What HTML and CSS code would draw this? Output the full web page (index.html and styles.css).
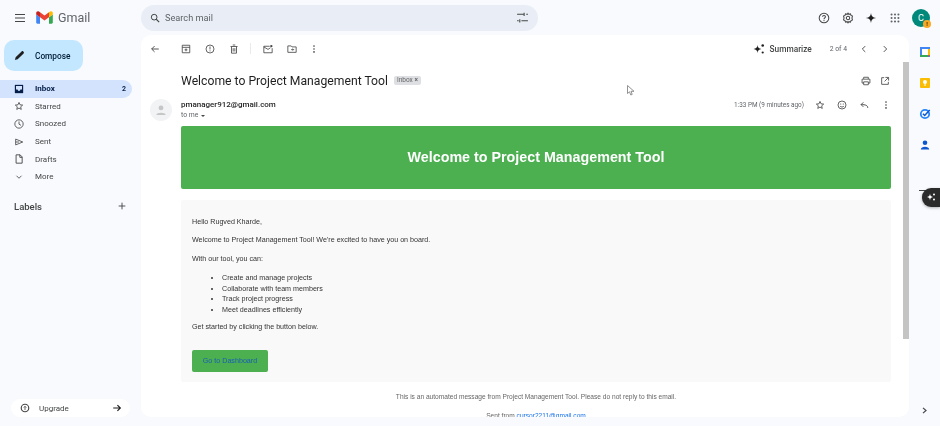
FILE: index.html
```html
<!DOCTYPE html>
<html lang="en">
<head>
  <meta charset="UTF-8">
  <title>Gmail</title>
  <meta name="viewport" content="width=device-width, initial-scale=1.0">
  <link rel="stylesheet" href="styles.css">
</head>
<body>

  <header class="topbar">
    <div class="brand">
      <svg class="menu-icon" viewBox="0 0 12 10"><path d="M1 1.5h10M1 5h10M1 8.5h10" stroke="#444746" stroke-width="1.1" fill="none"/></svg>
      <svg class="logo" viewBox="0 0 17 13">
        <path d="M0.2 3.5V11.5C0.2 12.2 0.7 12.7 1.4 12.7H4V6.2Z" fill="#4285f4"/>
        <path d="M13 6.2V12.7H15.6C16.3 12.7 16.8 12.2 16.8 11.5V3.5Z" fill="#34a853"/>
        <path d="M13 1.2V6.2L16.8 3.5V2C16.8 0.6 15.2 -0.2 14.1 0.6Z" fill="#fbbc04"/>
        <path d="M4 6.2V1.2L8.5 4.6L13 1.2V6.2L8.5 9.6Z" fill="#ea4335"/>
        <path d="M0.2 2V3.5L4 6.2V1.2L2.9 0.6C1.8 -0.2 0.2 0.6 0.2 2Z" fill="#c5221f"/>
      </svg>
      <span class="logo-text">Gmail</span>
    </div>
    <div class="search">
      <svg class="icon-md" viewBox="0 0 12 12"><circle cx="5" cy="5" r="3.4" stroke="#444746" stroke-width="1.2" fill="none"/><path d="M7.5 7.5L11 11" stroke="#444746" stroke-width="1.4"/></svg>
      <span class="search-text">Search mail</span>
      <svg class="search-tune" viewBox="0 0 12 12"><path d="M1 3h6M9.500 3H11M1 9h1.500M5 9h6M7.500 1.500v3M3.500 7.500v3" stroke="#444746" fill="none"/></svg>
    </div>
    <div class="top-actions">
      <svg class="icon-lg" viewBox="0 0 14 14"><circle cx="7" cy="7" r="5.6" stroke="#444746" stroke-width="1.2" fill="none"/><path d="M5.3 5.6C5.3 3.500 8.700 3.500 8.700 5.600C8.700 6.900 7 6.900 7 8.400" stroke="#444746" stroke-width="1.2" fill="none"/><circle cx="7" cy="10" r=".7" fill="#444746"/></svg>
      <svg class="icon-lg" viewBox="0 0 14 14"><path d="M7 1.300L8 2.700L9.900 2.200L10.500 3.900L12.200 4.700L11.600 7L12.200 9.300L10.500 10.100L9.900 11.800L8 11.300L7 12.700L6 11.300L4.100 11.800L3.500 10.100L1.800 9.300L2.400 7L1.800 4.700L3.500 3.900L4.100 2.200L6 2.700Z" stroke="#444746" stroke-width="1.2" fill="none"/><circle cx="7" cy="7" r="2" stroke="#444746" stroke-width="1.2" fill="none"/></svg>
      <svg class="icon-lg" viewBox="0 0 14 14"><path d="M7 1C7.400 5 9 6.600 13 7C9 7.400 7.400 9 7 13C6.600 9 5 7.400 1 7C5 6.600 6.600 5 7 1Z" fill="#1f1f1f"/></svg>
      <svg class="icon-lg" viewBox="0 0 14 14" fill="#5f6368"><circle cx="3" cy="3" r="1.2"/><circle cx="7" cy="3" r="1.2"/><circle cx="11" cy="3" r="1.2"/><circle cx="3" cy="7" r="1.2"/><circle cx="7" cy="7" r="1.2"/><circle cx="11" cy="7" r="1.2"/><circle cx="3" cy="11" r="1.2"/><circle cx="7" cy="11" r="1.2"/><circle cx="11" cy="11" r="1.2"/></svg>
      <div class="account">C<span class="account-badge">!</span></div>
    </div>
  </header>

  <div class="workspace">
    <nav class="sidebar">
      <button class="compose">
        <svg class="compose-icon" viewBox="0 0 12 12"><path d="M1 11L1.800 8L8.300 1.500C8.800 1 9.500 1 10 1.500L10.500 2C11 2.500 11 3.200 10.500 3.700L4 10.200Z" fill="#1f1f1f"/></svg>
        Compose
      </button>
      <ul class="nav-list">
        <li class="nav-item active">
          <svg class="icon-md" viewBox="0 0 12 12"><path d="M1 1h10v10H1z" fill="#041e49"/><path d="M2.400 2.400h7.200v4.200H7.700a1.700 1.700 0 0 1-3.400 0H2.400z" fill="#d3e3fd"/></svg>
          <span>Inbox</span><span class="count">2</span>
        </li>
        <li class="nav-item">
          <svg class="icon-md" viewBox="0 0 12 12"><path d="M6 1.700L7.300 4.600L10.400 4.900L8 7L8.700 10.100L6 8.500L3.300 10.100L4 7L1.600 4.900L4.700 4.600Z" stroke="#444746" fill="none"/></svg>
          <span>Starred</span>
        </li>
        <li class="nav-item">
          <svg class="icon-md" viewBox="0 0 12 12"><circle cx="6" cy="6" r="5" stroke="#444746" fill="none"/><path d="M6 3V6.200L8.400 7.600" stroke="#444746" fill="none"/></svg>
          <span>Snoozed</span>
        </li>
        <li class="nav-item">
          <svg class="icon-md" viewBox="0 0 12 12"><path d="M2 2.500L10.500 6L2 9.500ZM2 6H6" stroke="#444746" fill="none"/></svg>
          <span>Sent</span>
        </li>
        <li class="nav-item">
          <svg class="icon-md" viewBox="0 0 12 12"><path d="M2.500 1H7.300L9.800 3.500V11H2.500ZM7 1V4H9.800" stroke="#444746" stroke-width="1.100" fill="none"/></svg>
          <span>Drafts</span>
        </li>
        <li class="nav-item">
          <svg class="icon-md" viewBox="0 0 12 12"><path d="M3 4.500L6 7.500L9 4.500" stroke="#444746" fill="none"/></svg>
          <span>More</span>
        </li>
      </ul>
      <div class="labels">
        <span>Labels</span>
        <svg class="icon-md" viewBox="0 0 12 12"><path d="M6 2V10M2 6H10" stroke="#444746" stroke-width="1.100"/></svg>
      </div>
      <div class="upgrade">
        <svg class="icon-md" viewBox="0 0 12 12"><circle cx="6" cy="6" r="4.500" stroke="#444746" stroke-width="1.400" fill="none"/><path d="M6 8.500V4M4.500 5.500L6 4L7.500 5.500" stroke="#444746" fill="none"/></svg>
        <span>Upgrade</span>
        <svg class="icon-md upgrade-arrow" viewBox="0 0 12 12"><path d="M1.500 6H10M6.500 2.500L10 6L6.500 9.500" stroke="#1f1f1f" stroke-width="1.400" fill="none"/></svg>
      </div>
    </nav>

    <main class="mail-card">
      <div class="toolbar">
        <svg class="icon-md back" viewBox="0 0 12 12"><path d="M10.500 6H2M5.500 2.500L2 6L5.500 9.500" stroke="#444746" stroke-width="1.100" fill="none"/></svg>
        <div class="tool-group">
          <svg class="icon-md" viewBox="0 0 12 12"><path d="M1.500 1.500H10.500V10.500H1.500ZM1.500 4H10.500M4.300 7H7.700M6 5.300V8.700" stroke="#444746" fill="none"/></svg>
          <svg class="icon-md" viewBox="0 0 12 12"><circle cx="6" cy="6" r="4.800" stroke="#444746" fill="none"/><path d="M6 3V6.500M6 7.700V8.900" stroke="#444746" fill="none"/></svg>
          <svg class="icon-md" viewBox="0 0 12 12"><path d="M3 3.300V11H9V3.300M1.800 3H10.200M4.500 1.200H7.500M5 5V9M7 5V9" stroke="#444746" fill="none"/></svg>
          <span class="tool-sep"></span>
          <svg class="icon-md" viewBox="0 0 12 12"><path d="M8 2.700H1V10.500H11V5M1 3.500L6 6.500L9 4.500" stroke="#444746" fill="none"/><circle cx="10" cy="2.500" r="1.400" fill="#444746"/></svg>
          <svg class="icon-md" viewBox="0 0 12 12"><path d="M1 2.300H5L6 3.500H11V10H1ZM5 6.700H7.800M6.800 5.500L8 6.700L6.800 7.900" stroke="#444746" fill="none"/></svg>
          <svg class="icon-md tool-more" viewBox="0 0 12 12" fill="#444746"><circle cx="6" cy="2.500" r="1"/><circle cx="6" cy="6" r="1"/><circle cx="6" cy="9.500" r="1"/></svg>
        </div>
        <div class="summarize">
          <svg class="summarize-icon" viewBox="0 0 12 12" fill="#1f1f1f"><path d="M4.500 2C4.800 4.500 5.800 5.700 8.500 6C5.800 6.300 4.800 7.500 4.500 10C4.200 7.500 3.200 6.300 .5 6C3.200 5.700 4.200 4.500 4.500 2Z"/><circle cx="9.700" cy="2.500" r="1.300"/><circle cx="9.700" cy="9.500" r="1.100"/></svg>
          <span>Summarize</span>
        </div>
        <span class="pager">2 of 4</span>
        <svg class="icon-md" viewBox="0 0 12 12"><path d="M7.500 2.500L4 6L7.500 9.500" stroke="#444746" stroke-width="1.100" fill="none"/></svg>
        <svg class="icon-md pager-next" viewBox="0 0 12 12"><path d="M4.500 2.500L8 6L4.500 9.500" stroke="#444746" stroke-width="1.100" fill="none"/></svg>
      </div>

      <div class="mail-scroll">
        <div class="thread">
          <div class="subject-row">
            <h1>Welcome to Project Management Tool</h1>
            <span class="tag">Inbox <span class="tag-x">×</span></span>
            <div class="subject-actions">
              <svg class="icon-md" viewBox="0 0 12 12"><path d="M3.200 3.500V1.500H8.800V3.500M3.200 8.500H1.300V3.800H10.700V8.500H8.800M3.200 7H8.800V10.500H3.200Z" stroke="#444746" fill="none"/></svg>
              <svg class="icon-md" viewBox="0 0 12 12"><path d="M5 2H2V10H10V7M6.500 1.700H10.300V5.500M10 2L5.500 6.500" stroke="#444746" fill="none"/></svg>
            </div>
          </div>

          <div class="sender-row">
            <div class="avatar">
              <svg viewBox="0 0 12 12" fill="#c4c7c5"><circle cx="6" cy="4.200" r="2.100"/><path d="M2 10.300C2 7.800 10 7.800 10 10.300Z"/></svg>
            </div>
            <div class="sender-info">
              <div class="sender-name">pmanager912@gmail.com</div>
              <div class="to-me">to me <span class="caret"></span></div>
            </div>
            <div class="sender-meta">
              <span class="sent-time">1:33 PM (9 minutes ago)</span>
              <svg class="icon-md" viewBox="0 0 12 12"><path d="M6 1.700L7.300 4.600L10.400 4.900L8 7L8.700 10.100L6 8.500L3.300 10.100L4 7L1.600 4.900L4.700 4.600Z" stroke="#444746" fill="none"/></svg>
              <svg class="icon-md" viewBox="0 0 12 12"><circle cx="6" cy="6" r="4.800" stroke="#444746" fill="none"/><path d="M3.800 7.500C4.800 8.700 7.200 8.700 8.200 7.500" stroke="#444746" fill="none"/><circle cx="4.500" cy="4.800" r=".7" fill="#444746"/><circle cx="7.500" cy="4.800" r=".7" fill="#444746"/></svg>
              <svg class="icon-md" viewBox="0 0 12 12"><path d="M10.500 9.500C10.500 6.500 8 5.500 2.500 5.500M5.200 2.800L2.500 5.500L5.200 8.200" stroke="#444746" stroke-width="1.100" fill="none"/></svg>
              <svg class="icon-md" viewBox="0 0 12 12" fill="#444746"><circle cx="6" cy="2.500" r="1"/><circle cx="6" cy="6" r="1"/><circle cx="6" cy="9.500" r="1"/></svg>
            </div>
          </div>

          <div class="email-banner">Welcome to Project Management Tool</div>

          <div class="email-body">
            <p>Hello Rugved Kharde,</p>
            <p>Welcome to Project Management Tool! We're excited to have you on board.</p>
            <p>With our tool, you can:</p>
            <ul>
              <li>Create and manage projects</li>
              <li>Collaborate with team members</li>
              <li>Track project progress</li>
              <li>Meet deadlines efficiently</li>
            </ul>
            <p>Get started by clicking the button below.</p>
            <a class="email-btn" href="#">Go to Dashboard</a>
          </div>

          <div class="email-footer">
            <p>This is an automated message from Project Management Tool. Please do not reply to this email.</p>
            <p>Sent from <a href="#">cursor2211@gmail.com</a></p>
          </div>
        </div>
        <div class="scrollbar"><div class="scroll-thumb"></div></div>
      </div>

      <!-- mouse pointer caught in the screenshot -->
      <svg class="pointer" viewBox="0 0 8 11"><path d="M.5 .5V8.500L2.500 6.800L3.800 10L5.200 9.400L4 6.300H7Z" fill="#fff" stroke="#777" stroke-width=".8"/></svg>
    </main>

    <aside class="addons">
      <div class="addon-list">
        <svg class="addon" viewBox="0 0 12 12"><path d="M1 1H11V11H1Z" fill="#4285f4"/><path d="M1 9H9V11H2C1.400 11 1 10.600 1 10Z" fill="#34a853"/><path d="M9 3H11V9H9Z" fill="#fbbc04"/><path d="M9 9H11L9 11Z" fill="#ea4335"/><path d="M3 3H9V9H3Z" fill="#fff"/></svg>
        <svg class="addon" viewBox="0 0 12 12"><rect x="1" y="1" width="10" height="10" rx="1" fill="#fbbc04"/><circle cx="6" cy="5" r="2" fill="#fff"/><path d="M5 7.500H7V8.500H5Z" fill="#fff"/></svg>
        <svg class="addon" viewBox="0 0 12 12"><circle cx="6" cy="6" r="4.200" stroke="#2684fc" stroke-width="1.800" fill="none"/><path d="M4 5.800L5.700 7.500L10.700 2" stroke="#0b57d0" stroke-width="1.500" fill="none"/></svg>
        <svg class="addon" viewBox="0 0 12 12" fill="#0b57d0"><circle cx="6" cy="3.700" r="2.300"/><path d="M1.800 10.500C1.800 6.700 10.200 6.700 10.200 10.500Z"/></svg>
      </div>
      <div class="addon-divider"></div>
      <div class="gemini-pill">
        <svg viewBox="0 0 12 12" fill="#fff"><path d="M5 2.500C5.200 4.700 6 5.500 8 6C6 6.500 5.200 7.300 5 9.500C4.800 7.300 4 6.500 2 6C4 5.500 4.800 4.700 5 2.500Z"/><circle cx="9" cy="3.500" r="1"/><circle cx="9" cy="8.500" r="1"/></svg>
      </div>
      <svg class="addon-expand" viewBox="0 0 12 12"><path d="M4 2.500L8 6L4 9.500" stroke="#444746" stroke-width="1.600" fill="none"/></svg>
    </aside>
  </div>

</body>
</html>
```

FILE: styles.css
```css
* {
  box-sizing: border-box;
}

html, body {
  height: 100%;
}

body {
  margin: 0;
  background: #f8fafd;
  color: #1f1f1f;
  font-family: Roboto, 'Noto Sans', sans-serif;
  overflow: hidden;
  /* the reference is a rescaled, soft screenshot */
  filter: blur(0.4px);
}

svg {
  display: block;
  flex-shrink: 0;
}

.icon-md {
  width: 10px;
  height: 10px;
}

.icon-lg {
  width: 12px;
  height: 12px;
}

/* top bar */
.topbar {
  display: flex;
  align-items: center;
  height: 35px;
}

.brand {
  display: flex;
  align-items: center;
  width: 141px;
  padding-left: 14px;
}

.menu-icon {
  width: 12px;
  height: 10px;
  margin-right: 10px;
}

.logo {
  width: 17px;
  height: 13px;
  margin-right: 5px;
}

.logo-text {
  font-size: 12.5px;
  color: #5f6368;
}

.search {
  display: flex;
  align-items: center;
  width: 397px;
  height: 26px;
  padding: 0 9px 0 9px;
  background: #e9eef6;
  border-radius: 13px;
}

.search-text {
  margin-left: 5px;
  font-size: 9.2px;
  color: #5f6368;
}

.search-tune {
  width: 13px;
  height: 13px;
  margin-left: auto;
}

.top-actions {
  display: flex;
  align-items: center;
  gap: 11.5px;
  margin-left: auto;
  padding-right: 10px;
}

.account {
  position: relative;
  width: 18px;
  height: 18px;
  border-radius: 50%;
  background: #00897b;
  color: #fff;
  font-size: 9px;
  line-height: 18px;
  text-align: center;
}

.account-badge {
  position: absolute;
  right: -1px;
  bottom: -1px;
  width: 8px;
  height: 8px;
  border-radius: 50%;
  background: #f9a825;
  color: #3c2a00;
  font-size: 6px;
  font-weight: 700;
  line-height: 8px;
}

/* layout */
.workspace {
  display: flex;
  height: 382px;
}

.sidebar {
  display: flex;
  flex-direction: column;
  width: 141px;
}

.compose {
  display: flex;
  align-items: center;
  gap: 10px;
  width: 79px;
  height: 31px;
  margin: 5px 0 9px 4px;
  padding: 0 0 0 10px;
  border: none;
  border-radius: 10px;
  background: #c2e7ff;
  color: #001d35;
  font-family: inherit;
  font-size: 8.3px;
  font-weight: 500;
}

.compose-icon {
  width: 11px;
  height: 11px;
}

.nav-list {
  margin: 0;
  padding: 0;
  list-style: none;
}

.nav-item {
  display: flex;
  align-items: center;
  gap: 11px;
  width: 132px;
  height: 17.6px;
  padding: 0 6px 0 14px;
  border-radius: 0 9px 9px 0;
  font-size: 8px;
  color: #444746;
}

.nav-item.active {
  background: #d3e3fd;
  color: #041e49;
  font-weight: 700;
}

.count {
  margin-left: auto;
  font-size: 7px;
}

.labels {
  display: flex;
  align-items: center;
  justify-content: space-between;
  width: 132px;
  margin-top: 15px;
  padding: 0 5px 0 14px;
  font-size: 9.5px;
  font-weight: 500;
  color: #444746;
}

.upgrade {
  display: flex;
  align-items: center;
  gap: 9px;
  width: 119px;
  height: 18px;
  margin: auto 0 0 11px;
  padding: 0 8px 0 9px;
  border-radius: 9px;
  background: #fff;
  font-size: 8px;
  color: #444746;
}

.upgrade-arrow {
  margin-left: auto;
}

/* mail card */
.mail-card {
  position: relative;
  display: flex;
  flex-direction: column;
  width: 768px;
  border-radius: 10px;
  background: #fff;
  overflow: hidden;
}

.pointer {
  position: absolute;
  top: 50px;
  left: 486px;
  width: 8px;
  height: 11px;
}

.toolbar {
  display: flex;
  align-items: center;
  height: 27px;
  padding: 0 19px 0 9px;
  flex-shrink: 0;
}

.back {
  margin-right: 21px;
}

.tool-group {
  display: flex;
  align-items: center;
  gap: 14px;
}

.tool-sep {
  width: 1px;
  height: 11px;
  margin: 0 -2px 0 -3px;
  background: #e8eaed;
}

.tool-more {
  margin-left: -2px;
}

.summarize {
  display: flex;
  align-items: center;
  gap: 5px;
  margin-left: auto;
  font-size: 8.3px;
  font-weight: 500;
  color: #444746;
}

.summarize-icon {
  width: 12px;
  height: 12px;
}

.pager {
  margin: 0 12px 0 18px;
  font-size: 6.8px;
  color: #5f6368;
}

.pager-next {
  margin-left: 11px;
}

.mail-scroll {
  display: flex;
  flex: 1;
  min-height: 0;
}

.thread {
  flex: 1;
  min-width: 0;
  padding: 0 12px 0 9px;
  overflow: hidden;
}

.subject-row {
  display: flex;
  align-items: center;
  height: 37px;
  padding: 0 1px 0 31px;
}

.subject-row h1 {
  margin: 0;
  font-size: 12.2px;
  font-weight: 400;
  color: #1f1f1f;
}

.tag {
  margin-left: 6px;
  padding: 0 3px;
  border-radius: 2px;
  background: #dddfe2;
  font-size: 6.5px;
  line-height: 9px;
  color: #666;
}

.tag-x {
  font-weight: 700;
}

.subject-actions {
  display: flex;
  gap: 9px;
  margin-left: auto;
}

.sender-row {
  display: flex;
  height: 27px;
}

.avatar {
  width: 22px;
  height: 22px;
  margin-right: 9px;
  border-radius: 50%;
  background: #f1f3f4;
  padding: 4px;
}

.sender-info {
  padding-top: 1px;
}

.sender-name {
  font-size: 8px;
  font-weight: 500;
  line-height: 10px;
  color: #1f1f1f;
}

.to-me {
  display: flex;
  align-items: center;
  gap: 3px;
  font-size: 6.8px;
  line-height: 11px;
  color: #5f6368;
}

.caret {
  width: 0;
  height: 0;
  border: 2.3px solid transparent;
  border-top: 2.5px solid #444746;
  border-bottom: 0;
}

.sender-meta {
  display: flex;
  align-items: center;
  align-self: flex-start;
  gap: 12px;
  height: 12px;
  margin-left: auto;
}

.sent-time {
  margin-right: -1px;
  font-size: 6.4px;
  color: #5f6368;
}

.email-banner {
  height: 63px;
  margin-left: 31px;
  border-radius: 2px;
  background: #4caf50;
  color: #fff;
  font-family: 'Liberation Sans', Arial, sans-serif;
  font-size: 14.3px;
  font-weight: 700;
  line-height: 62px;
  text-align: center;
}

.email-body {
  height: 182px;
  margin: 11px 0 0 31px;
  padding: 18px 11px;
  background: #f9f9f9;
  border-radius: 2px;
  font-family: 'Liberation Sans', Arial, sans-serif;
  font-size: 7.15px;
  color: #333;
}

.email-body p {
  margin: 0 0 10px;
  line-height: 8.3px;
}

.email-body ul {
  margin: 0 0 7px;
  padding-left: 30px;
}

.email-body li {
  line-height: 10.8px;
}

.email-btn {
  display: block;
  width: 76px;
  height: 22px;
  margin-top: 19px;
  border-radius: 2px;
  background: #4caf50;
  color: #1a5fb4;
  line-height: 22px;
  text-align: center;
  text-decoration: none;
}

.email-footer {
  margin: 11px 0 0 31px;
  font-family: 'Liberation Sans', Arial, sans-serif;
  font-size: 6.6px;
  color: #666;
  text-align: center;
}

.email-footer p {
  margin: 0 0 11px;
  line-height: 8px;
}

.email-footer a {
  color: #1a73e8;
}

.scrollbar {
  width: 6px;
  flex-shrink: 0;
}

.scroll-thumb {
  height: 277px;
  background: #c4c4c4;
}

/* right add-ons */
.addons {
  position: relative;
  flex: 1;
  padding-top: 11px;
}

.addon-list {
  display: flex;
  flex-direction: column;
  align-items: center;
  gap: 19px;
}

.addon {
  width: 12px;
  height: 12px;
}

.addon-divider {
  width: 11px;
  height: 1px;
  margin: 39px auto 0;
  background: #444746;
}

.gemini-pill {
  position: absolute;
  top: 153px;
  right: 0;
  width: 18px;
  height: 19px;
  padding: 3px;
  border-radius: 9px 0 0 9px;
  background: #2b2b2b;
  box-shadow: 0 1px 3px rgba(0,0,0,0.3);
}

.addon-expand {
  position: absolute;
  right: 11px;
  bottom: 2px;
  width: 9px;
  height: 9px;
}
```
